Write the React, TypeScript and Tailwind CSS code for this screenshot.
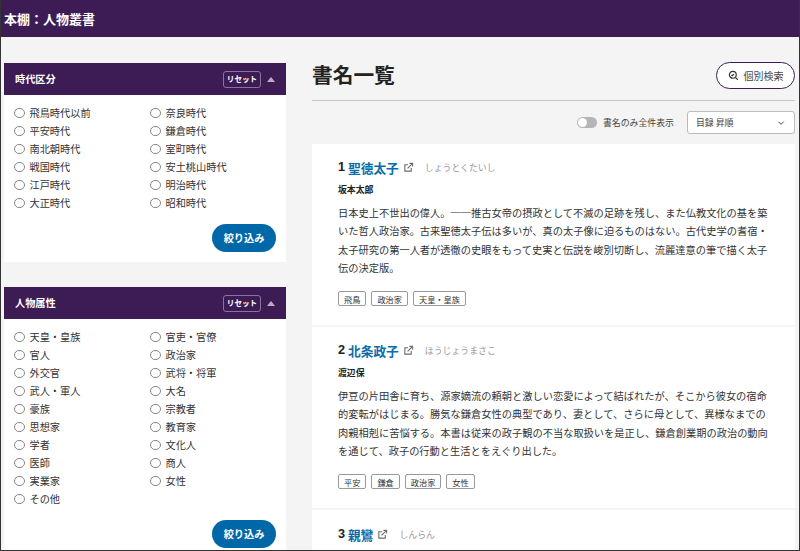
const eras = ['飛鳥時代以前', '奈良時代', '平安時代', '鎌倉時代', '南北朝時代', '室町時代', '戦国時代', '安土桃山時代', '江戸時代', '明治時代', '大正時代', '昭和時代'];
const roles = ['天皇・皇族', '官吏・官僚', '官人', '政治家', '外交官', '武将・将軍', '武人・軍人', '大名', '豪族', '宗教者', '思想家', '教育家', '学者', '文化人', '医師', '商人', '実業家', '女性', 'その他'];

const books = [
  {
    no: 1,
    title: '聖徳太子',
    kana: 'しょうとくたいし',
    author: '坂本太郎',
    text: '日本史上不世出の偉人。──推古女帝の摂政として不滅の足跡を残し、また仏教文化の基を築いた哲人政治家。古来聖徳太子伝は多いが、真の太子像に迫るものはない。古代史学の耆宿・太子研究の第一人者が透徹の史眼をもって史実と伝説を峻別切断し、流麗達意の筆で描く太子伝の決定版。',
    tags: ['飛鳥', '政治家', '天皇・皇族'],
  },
  {
    no: 2,
    title: '北条政子',
    kana: 'ほうじょうまさこ',
    author: '渡辺保',
    text: '伊豆の片田舎に育ち、源家嫡流の頼朝と激しい恋愛によって結ばれたが、そこから彼女の宿命的変転がはじまる。勝気な鎌倉女性の典型であり、妻として、さらに母として、異様なまでの肉親相剋に苦悩する。本書は従来の政子観の不当な取扱いを是正し、鎌倉創業期の政治の動向を通じて、政子の行動と生活とをえぐり出した。',
    tags: ['平安', '鎌倉', '政治家', '女性'],
  },
];

function ExternalIcon() {
  return (
    <svg width="11" height="11" viewBox="0 0 24 24" fill="none" stroke="#6b6b6b" strokeWidth="2.4" className="shrink-0">
      <path d="M18 13v7H4V6h7" />
      <path d="M14 3h7v7" />
      <path d="M21 3 10 14" />
    </svg>
  );
}

function FilterPanel({ title, items, className }: { title: string; items: string[]; className: string }) {
  return (
    <section className={`bg-white ${className}`}>
      <div className="h-8 bg-[#3d1c56] flex items-center pl-[11px] pr-[9px] text-white">
        <h2 className="text-[10.2px] font-bold flex-1">{title}</h2>
        <span className="h-[17px] w-[38px] border border-[#8a7398] rounded-[3px] flex items-center justify-center text-[7.6px] font-bold">リセット</span>
        <span className="ml-[6px] mr-[2px] w-0 h-0 border-x-[4.5px] border-x-transparent border-b-[5px] border-b-[#b9adc2]" />
      </div>
      <div className="grid grid-cols-[136px_1fr] pl-[10px] pt-[9px]">
        {items.map((item) => (
          <label key={item} className="h-[18px] flex items-center gap-[5px] text-[10.2px] text-[#333]">
            <span className="w-[10.5px] h-[10.5px] rounded-full border border-[#888] bg-white shrink-0" />
            {item}
          </label>
        ))}
      </div>
      <div className="flex justify-end pr-[10px] pt-[12px]">
        <button className="w-16 h-7 rounded-full bg-[#0068a9] text-white text-[10.2px] font-bold">絞り込み</button>
      </div>
    </section>
  );
}

function BookCard({ book }: { book: (typeof books)[number] }) {
  return (
    <article className="bg-white h-[181px] mb-[2px] pl-[26px] pr-[20px] pt-[15px]">
      <div className="flex items-center h-[17px] text-[#222]">
        <span className="text-[12.7px] font-bold mr-[3px]" style={{ fontFamily: '"Liberation Sans", sans-serif' }}>{book.no}</span>
        <span className="text-[12.7px] font-bold text-[#0a6ca8]">{book.title}</span>
        <span className="ml-1 mr-[11px]"><ExternalIcon /></span>
        <span className="text-[8.9px] text-[#999]">{book.kana}</span>
      </div>
      <div className="text-[8.9px] font-bold text-[#222] mt-[8px] leading-[12px]">{book.author}</div>
      <p className="text-[10.24px] leading-[18.3px] text-[#333] mt-[8px] w-[432px]">{book.text}</p>
      <div className="flex gap-[5px] mt-[14px]">
        {book.tags.map((tag) => (
          <span key={tag} className="h-[15px] px-[5px] border border-[#999] rounded-[2px] flex items-center text-[8.2px] text-[#333]">{tag}</span>
        ))}
      </div>
    </article>
  );
}

export default function App() {
  return (
    <div className="h-[551px] w-[800px] overflow-hidden bg-[#f4f4f5] border-l border-r border-b border-[#333] flex flex-col" style={{ fontFamily: '"Noto Sans CJK JP", "Noto Sans", sans-serif' }}>
      <header className="h-[37px] shrink-0 bg-[#3d1c56] flex items-center pl-[3px] text-[13px] font-bold text-white">本棚：人物叢書</header>
      <div className="flex flex-1 min-h-0 pl-[3px]">
        <aside className="w-[282px] pt-[26px] flex flex-col shrink-0">
          <FilterPanel title="時代区分" items={eras} className="h-[199px] mb-[25px]" />
          <FilterPanel title="人物属性" items={roles} className="flex-1" />
        </aside>
        <main className="ml-[26px] w-[483px] shrink-0">
          <div className="h-[64px] flex items-center justify-between border-b border-[#c8c8c8] pt-[22px] pb-[9px]">
            <h1 className="text-[20.7px] font-bold text-[#222]">書名一覧</h1>
            <button className="w-[79px] h-[27px] rounded-full border border-[#3d1c56] bg-white flex items-center justify-center gap-[5px] text-[10px] text-[#444]">
              <svg width="11" height="11" viewBox="0 0 24 24" fill="none" stroke="#333" strokeWidth="2.6">
                <circle cx="10.5" cy="10.5" r="7.5" />
                <path d="m16 16 5.5 5.5" />
                <path d="m7.5 10.5 2 2 3.5-3.5" />
              </svg>
              個別検索
            </button>
          </div>
          <div className="h-[43px] flex items-center justify-end">
            <span className="w-5 h-[11px] rounded-full bg-[#b5b5b5] flex items-center pl-px mr-[6px]">
              <span className="w-[9px] h-[9px] rounded-full bg-white" />
            </span>
            <span className="text-[8.9px] text-[#444] mr-[13px]">書名のみ全件表示</span>
            <div className="w-[108px] h-[23px] border border-[#bbb] rounded-[3px] bg-white flex items-center justify-between pl-2 pr-[9px] text-[8.9px] text-[#444]">
              目録 昇順
              <svg width="8" height="8" viewBox="0 0 24 24" fill="none" stroke="#444" strokeWidth="3">
                <path d="m4 8 8 8 8-8" />
              </svg>
            </div>
          </div>
          {books.map((book) => (
            <BookCard key={book.no} book={book} />
          ))}
          <article className="bg-white h-[60px] pl-[26px] pt-[16px]">
            <div className="flex items-center h-[17px] text-[#222]">
              <span className="text-[12.7px] font-bold mr-[3px]" style={{ fontFamily: '"Liberation Sans", sans-serif' }}>3</span>
              <span className="text-[12.7px] font-bold text-[#0a6ca8]">親鸞</span>
              <span className="ml-1 mr-[11px]"><ExternalIcon /></span>
              <span className="text-[8.9px] text-[#999]">しんらん</span>
            </div>
          </article>
        </main>
      </div>
    </div>
  );
}
